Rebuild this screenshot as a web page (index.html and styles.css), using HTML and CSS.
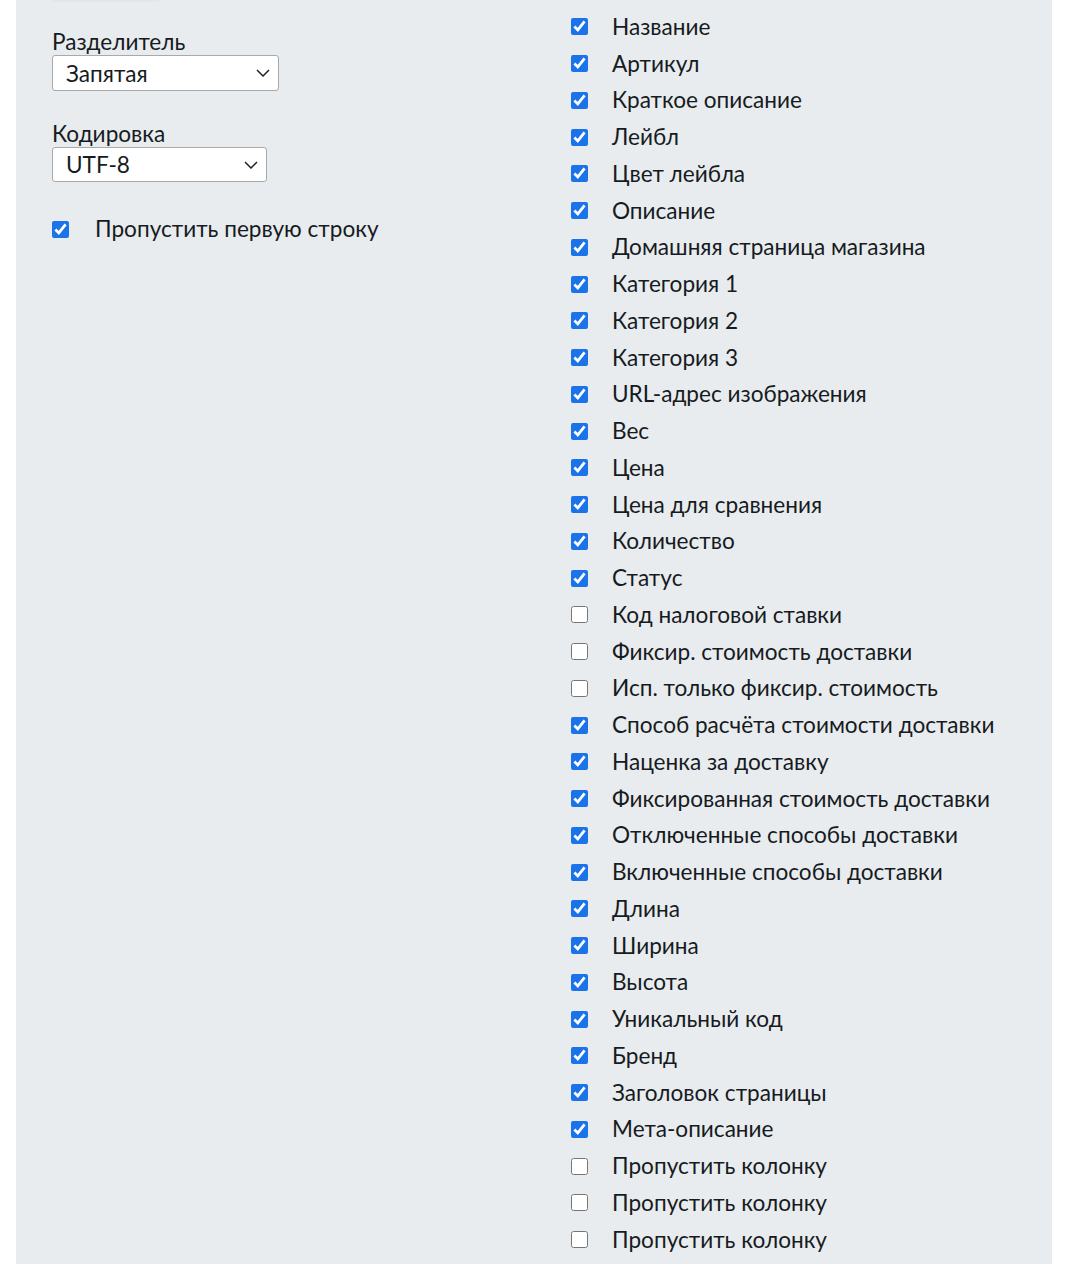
FILE: index.html
```html
<!DOCTYPE html>
<html lang="ru">
<head>
<meta charset="utf-8">
<link rel="stylesheet" href="styles.css">
</head>
<body>
<div class="panel">
  <div class="left">
    <div class="topbar"></div>
    <div class="field">
      <label class="field-label">Разделитель</label>
      <div class="select select-a">Запятая<svg class="chev" viewBox="0 0 14 8" width="14" height="8"><path d="M1 1l6 6 6-6" fill="none" stroke="#222" stroke-width="1.5"/></svg></div>
    </div>
    <div class="field">
      <label class="field-label">Кодировка</label>
      <div class="select select-b">UTF-8<svg class="chev" viewBox="0 0 14 8" width="14" height="8"><path d="M1 1l6 6 6-6" fill="none" stroke="#222" stroke-width="1.5"/></svg></div>
    </div>
    <label class="check skip"><input type="checkbox" checked><span>Пропустить первую строку</span></label>
  </div>
  <div class="right">
    <label class="check"><input type="checkbox" checked><span>Название</span></label>
    <label class="check"><input type="checkbox" checked><span>Артикул</span></label>
    <label class="check"><input type="checkbox" checked><span>Краткое описание</span></label>
    <label class="check"><input type="checkbox" checked><span>Лейбл</span></label>
    <label class="check"><input type="checkbox" checked><span>Цвет лейбла</span></label>
    <label class="check"><input type="checkbox" checked><span>Описание</span></label>
    <label class="check"><input type="checkbox" checked><span>Домашняя страница магазина</span></label>
    <label class="check"><input type="checkbox" checked><span>Категория 1</span></label>
    <label class="check"><input type="checkbox" checked><span>Категория 2</span></label>
    <label class="check"><input type="checkbox" checked><span>Категория 3</span></label>
    <label class="check"><input type="checkbox" checked><span>URL-адрес изображения</span></label>
    <label class="check"><input type="checkbox" checked><span>Вес</span></label>
    <label class="check"><input type="checkbox" checked><span>Цена</span></label>
    <label class="check"><input type="checkbox" checked><span>Цена для сравнения</span></label>
    <label class="check"><input type="checkbox" checked><span>Количество</span></label>
    <label class="check"><input type="checkbox" checked><span>Статус</span></label>
    <label class="check"><input type="checkbox"><span>Код налоговой ставки</span></label>
    <label class="check"><input type="checkbox"><span>Фиксир. стоимость доставки</span></label>
    <label class="check"><input type="checkbox"><span>Исп. только фиксир. стоимость</span></label>
    <label class="check"><input type="checkbox" checked><span>Способ расчёта стоимости доставки</span></label>
    <label class="check"><input type="checkbox" checked><span>Наценка за доставку</span></label>
    <label class="check"><input type="checkbox" checked><span>Фиксированная стоимость доставки</span></label>
    <label class="check"><input type="checkbox" checked><span>Отключенные способы доставки</span></label>
    <label class="check"><input type="checkbox" checked><span>Включенные способы доставки</span></label>
    <label class="check"><input type="checkbox" checked><span>Длина</span></label>
    <label class="check"><input type="checkbox" checked><span>Ширина</span></label>
    <label class="check"><input type="checkbox" checked><span>Высота</span></label>
    <label class="check"><input type="checkbox" checked><span>Уникальный код</span></label>
    <label class="check"><input type="checkbox" checked><span>Бренд</span></label>
    <label class="check"><input type="checkbox" checked><span>Заголовок страницы</span></label>
    <label class="check"><input type="checkbox" checked><span>Мета-описание</span></label>
    <label class="check"><input type="checkbox"><span>Пропустить колонку</span></label>
    <label class="check"><input type="checkbox"><span>Пропустить колонку</span></label>
    <label class="check"><input type="checkbox"><span>Пропустить колонку</span></label>
  </div>
</div>
</body>
</html>
```
FILE: styles.css
```css
html, body {
  margin: 0;
  padding: 0;
  background: #ffffff;
}
body {
  font-family: Lato, "Noto Sans", sans-serif;
  color: #161b22;
  font-size: 22.6px;
}
.panel {
  margin-left: 16px;
  width: 1036px;
  height: 1264px;
  background: #e9ecef;
  display: flex;
  box-sizing: border-box;
  padding-left: 36px;
}
.left {
  width: 519px;
  display: flex;
  flex-direction: column;
}
.topbar {
  width: 106px;
  height: 2px;
  margin-left: 1px;
  background: #e2e6ea;
  margin-bottom: 27px;
}
.field {
  display: flex;
  flex-direction: column;
  margin-bottom: 30px;
}
.field-label {
  line-height: 26px;
}
.select {
  box-sizing: border-box;
  height: 36px;
  background: #fff;
  border: 1px solid #a9a9a9;
  border-radius: 3px;
  padding-left: 13px;
  display: flex;
  align-items: center;
  justify-content: space-between;
  padding-right: 8px;
}
.select-a { width: 227px; }
.select-b { width: 215px; height: 35px; }
.chev { display: block; }
.check {
  display: flex;
  align-items: center;
  height: 36.75px;
}
.check input {
  margin: 0;
  width: 17px;
  height: 17px;
  accent-color: #1a73e8;
  flex: none;
}
.check span {
  margin-left: 24px;
  line-height: 26px;
}
.skip {
  margin-top: -1px;
}
.skip span { margin-left: 26px; }
.right {
  padding-top: 8.5px;
  display: flex;
  flex-direction: column;
}
```
